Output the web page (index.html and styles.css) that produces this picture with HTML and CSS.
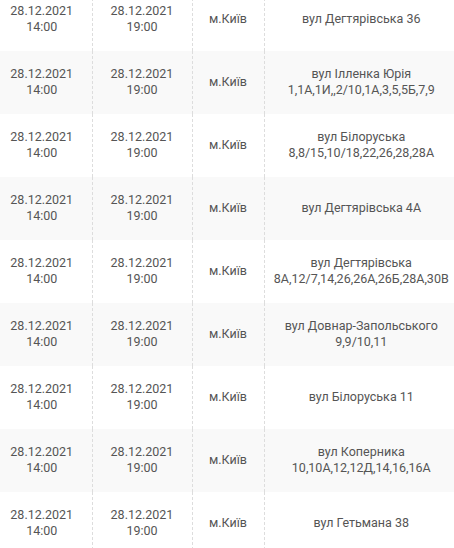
FILE: index.html
```html
<!DOCTYPE html>
<html lang="uk">
<head>
<meta charset="utf-8">
<link rel="stylesheet" href="styles.css">
</head>
<body>
<div class="wrap">
<table class="tbl">
<colgroup><col class="c1"><col class="c2"><col class="c3"><col class="c4"></colgroup>
<tbody>
<tr><td>28.12.2021<br>14:00</td><td>28.12.2021<br>19:00</td><td>м.Київ</td><td>вул Дегтярівська 36</td></tr>
<tr><td>28.12.2021<br>14:00</td><td>28.12.2021<br>19:00</td><td>м.Київ</td><td>вул Ілленка Юрія<br>1,1А,1И,,2/10,1А,3,5,5Б,7,9</td></tr>
<tr><td>28.12.2021<br>14:00</td><td>28.12.2021<br>19:00</td><td>м.Київ</td><td>вул Білоруська<br>8,8/15,10/18,22,26,28,28А</td></tr>
<tr><td>28.12.2021<br>14:00</td><td>28.12.2021<br>19:00</td><td>м.Київ</td><td>вул Дегтярівська 4А</td></tr>
<tr><td>28.12.2021<br>14:00</td><td>28.12.2021<br>19:00</td><td>м.Київ</td><td>вул Дегтярівська<br>8А,12/7,14,26,26А,26Б,28А,30В</td></tr>
<tr><td>28.12.2021<br>14:00</td><td>28.12.2021<br>19:00</td><td>м.Київ</td><td>вул Довнар-Запольського<br>9,9/10,11</td></tr>
<tr><td>28.12.2021<br>14:00</td><td>28.12.2021<br>19:00</td><td>м.Київ</td><td>вул Білоруська 11</td></tr>
<tr><td>28.12.2021<br>14:00</td><td>28.12.2021<br>19:00</td><td>м.Київ</td><td>вул Коперника<br>10,10А,12,12Д,14,16,16А</td></tr>
<tr><td>28.12.2021<br>14:00</td><td>28.12.2021<br>19:00</td><td>м.Київ</td><td>вул Гетьмана 38</td></tr>
</tbody>
</table>
</div>
</body>
</html>
```
FILE: styles.css
```css
html, body {
  margin: 0;
  padding: 0;
  background: #fff;
  overflow: hidden;
}
.wrap {
  width: 454px;
  height: 548px;
  overflow: hidden;
}
.tbl {
  margin-left: -8px;
  margin-top: -12px;
  border-collapse: collapse;
  table-layout: fixed;
  width: 466px;
  font-family: Roboto, "Liberation Sans", sans-serif;
  font-size: 12.5px;
  line-height: 16px;
  color: #555;
}
.c1 { width: 100px; }
.c2 { width: 100px; }
.c3 { width: 72px; }
.c4 { width: 194px; }
.tbl td {
  height: 63px;
  padding: 0 0 1px 0;
  text-align: center;
  vertical-align: middle;
  border-left: 1px dashed #ddd;
  box-sizing: border-box;
}
.tbl td:first-child {
  border-left: none;
}
.tbl tr:nth-child(even) td {
  background: #f9f9f9;
}
```
